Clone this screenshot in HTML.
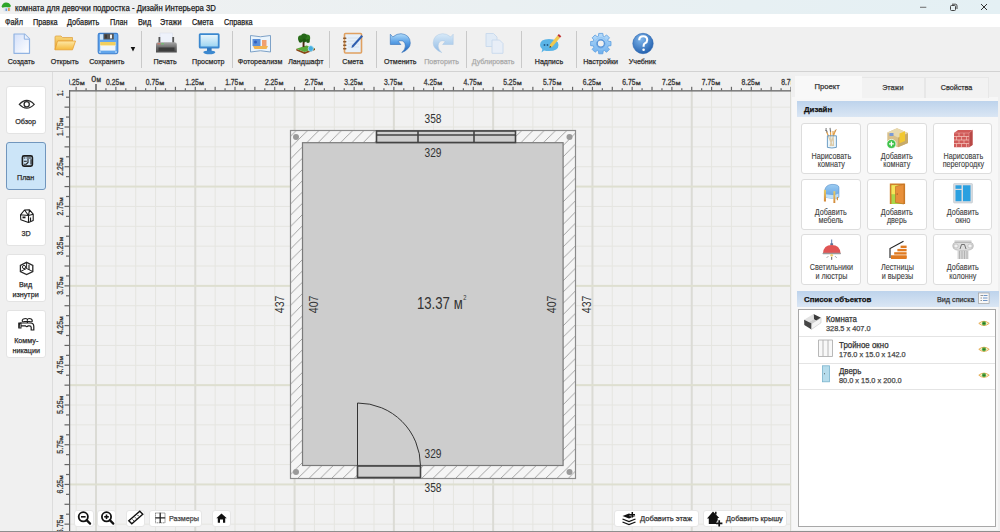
<!DOCTYPE html>
<html><head><meta charset="utf-8"><style>
*{margin:0;padding:0;box-sizing:border-box}
html,body{width:1000px;height:532px;overflow:hidden;background:#f0f0f0;font-family:"Liberation Sans",sans-serif;color:#222}
.a{position:absolute}
.t{position:absolute;white-space:nowrap;line-height:1;-webkit-text-stroke:0.25px currentColor}
.s{display:inline-block;transform-origin:0 50%}
.c{text-align:center}
.c .s{transform-origin:50% 50%}
.sep{position:absolute;top:31px;width:1px;height:37px;background:#c9c9c9}
.lb{position:absolute;left:6px;width:40px;height:48px;background:#fff;border:1px solid #e3e3e3;border-radius:3px}
.db{position:absolute;width:60px;height:51px;background:#fff;border:1px solid #dddddd;border-radius:3px}
.bb{position:absolute;top:510px;height:17px;background:#fff;border:1px solid #e6e6e6;border-radius:3px}
.ic{position:absolute}
</style></head><body>
<div class="a" style="left:0;top:0;width:1000px;height:14px;background:linear-gradient(90deg,#f0f1f1 0%,#eaf0f2 50%,#e4f0f4 100%)"></div>

<div class="t" style="left:14.7px;top:4px;font-size:9.2px;color:#1a1a1a;"><span class="s" style="transform:scaleX(0.845)">комната для девочки подростка - Дизайн Интерьера 3D</span></div>

<div class="a" style="left:0;top:14px;width:1000px;height:13.3px;background:#fff"></div>
<div class="t" style="left:5px;top:17.8px;font-size:8.7px;color:#1a1a1a;"><span class="s" style="transform:scaleX(0.84)">Файл</span></div>
<div class="t" style="left:33px;top:17.8px;font-size:8.7px;color:#1a1a1a;"><span class="s" style="transform:scaleX(0.84)">Правка</span></div>
<div class="t" style="left:67px;top:17.8px;font-size:8.7px;color:#1a1a1a;"><span class="s" style="transform:scaleX(0.84)">Добавить</span></div>
<div class="t" style="left:110px;top:17.8px;font-size:8.7px;color:#1a1a1a;"><span class="s" style="transform:scaleX(0.84)">План</span></div>
<div class="t" style="left:138px;top:17.8px;font-size:8.7px;color:#1a1a1a;"><span class="s" style="transform:scaleX(0.84)">Вид</span></div>
<div class="t" style="left:160px;top:17.8px;font-size:8.7px;color:#1a1a1a;"><span class="s" style="transform:scaleX(0.84)">Этажи</span></div>
<div class="t" style="left:192px;top:17.8px;font-size:8.7px;color:#1a1a1a;"><span class="s" style="transform:scaleX(0.84)">Смета</span></div>
<div class="t" style="left:224px;top:17.8px;font-size:8.7px;color:#1a1a1a;"><span class="s" style="transform:scaleX(0.84)">Справка</span></div>
<div class="a" style="left:0;top:27.3px;width:1000px;height:43.5px;background:#f0f0f0"></div>
<div class="a" style="left:0;top:70.5px;width:1000px;height:1.5px;background:#d2d2d2"></div>
<div class="sep" style="left:141px"></div>
<div class="sep" style="left:232px"></div>
<div class="sep" style="left:329px"></div>
<div class="sep" style="left:376px"></div>
<div class="sep" style="left:466px"></div>
<div class="sep" style="left:521px"></div>
<div class="sep" style="left:576px"></div>
<div class="t" style="left:21.5px;top:57.8px;font-size:8px;color:#2a2a2a;width:70px;margin-left:-35.0px;text-align:center;"><span class="s" style="transform:scaleX(0.89);transform-origin:50% 50%">Создать</span></div>
<div class="t" style="left:64.3px;top:57.8px;font-size:8px;color:#2a2a2a;width:70px;margin-left:-35.0px;text-align:center;"><span class="s" style="transform:scaleX(0.89);transform-origin:50% 50%">Открыть</span></div>
<div class="t" style="left:107.1px;top:57.8px;font-size:8px;color:#2a2a2a;width:70px;margin-left:-35.0px;text-align:center;"><span class="s" style="transform:scaleX(0.89);transform-origin:50% 50%">Сохранить</span></div>
<div class="t" style="left:165.3px;top:57.8px;font-size:8px;color:#2a2a2a;width:70px;margin-left:-35.0px;text-align:center;"><span class="s" style="transform:scaleX(0.89);transform-origin:50% 50%">Печать</span></div>
<div class="t" style="left:207.9px;top:57.8px;font-size:8px;color:#2a2a2a;width:70px;margin-left:-35.0px;text-align:center;"><span class="s" style="transform:scaleX(0.89);transform-origin:50% 50%">Просмотр</span></div>
<div class="t" style="left:259.6px;top:57.8px;font-size:8px;color:#2a2a2a;width:70px;margin-left:-35.0px;text-align:center;"><span class="s" style="transform:scaleX(0.89);transform-origin:50% 50%">Фотореализм</span></div>
<div class="t" style="left:305.5px;top:57.8px;font-size:8px;color:#2a2a2a;width:70px;margin-left:-35.0px;text-align:center;"><span class="s" style="transform:scaleX(0.89);transform-origin:50% 50%">Ландшафт</span></div>
<div class="t" style="left:352.8px;top:57.8px;font-size:8px;color:#2a2a2a;width:70px;margin-left:-35.0px;text-align:center;"><span class="s" style="transform:scaleX(0.89);transform-origin:50% 50%">Смета</span></div>
<div class="t" style="left:400px;top:57.8px;font-size:8px;color:#2a2a2a;width:70px;margin-left:-35.0px;text-align:center;"><span class="s" style="transform:scaleX(0.89);transform-origin:50% 50%">Отменить</span></div>
<div class="t" style="left:441.6px;top:57.8px;font-size:8px;color:#a9a9a9;width:70px;margin-left:-35.0px;text-align:center;"><span class="s" style="transform:scaleX(0.89);transform-origin:50% 50%">Повторить</span></div>
<div class="t" style="left:493.1px;top:57.8px;font-size:8px;color:#a9a9a9;width:70px;margin-left:-35.0px;text-align:center;"><span class="s" style="transform:scaleX(0.89);transform-origin:50% 50%">Дублировать</span></div>
<div class="t" style="left:548.8px;top:57.8px;font-size:8px;color:#2a2a2a;width:70px;margin-left:-35.0px;text-align:center;"><span class="s" style="transform:scaleX(0.89);transform-origin:50% 50%">Надпись</span></div>
<div class="t" style="left:600.3px;top:57.8px;font-size:8px;color:#2a2a2a;width:70px;margin-left:-35.0px;text-align:center;"><span class="s" style="transform:scaleX(0.89);transform-origin:50% 50%">Настройки</span></div>
<div class="t" style="left:642.5px;top:57.8px;font-size:8px;color:#2a2a2a;width:70px;margin-left:-35.0px;text-align:center;"><span class="s" style="transform:scaleX(0.89);transform-origin:50% 50%">Учебник</span></div>

<div class="a" style="left:52px;top:72px;width:1px;height:459px;background:#dcdcdc"></div>
<div class="lb" style="top:86px;"></div>
<div class="t c" style="left:6px;top:117.6px;width:40px;font-size:8px;color:#2a2a2a"><span class="s" style="transform:scaleX(.9)">Обзор</span></div>
<div class="lb" style="top:142px;background:#cce5f8;border-color:#7196bd;"></div>
<div class="t c" style="left:6px;top:173.6px;width:40px;font-size:8px;color:#2a2a2a"><span class="s" style="transform:scaleX(.9)">План</span></div>
<div class="lb" style="top:198px;"></div>
<div class="t c" style="left:6px;top:229.6px;width:40px;font-size:8px;color:#2a2a2a"><span class="s" style="transform:scaleX(.9)">3D</span></div>
<div class="lb" style="top:254px;"></div>
<div class="t c" style="left:6px;top:280px;width:40px;font-size:8px;line-height:10px;color:#2a2a2a"><span class="s" style="transform:scaleX(.9)">Вид<br>изнутри</span></div>
<div class="lb" style="top:310px;"></div>
<div class="t c" style="left:6px;top:336px;width:40px;font-size:8px;line-height:10px;color:#2a2a2a"><span class="s" style="transform:scaleX(.9)">Комму-<br>никации</span></div>

<svg class="a" style="left:53px;top:72px" width="738" height="460" viewBox="53 72 738 460">
<defs><pattern id="hatch" patternUnits="userSpaceOnUse" width="11.27" height="11.27" x="9.85" y="0"><rect width="11.27" height="11.27" fill="#f5f5f5"/><path d="M-1,1 L1,-1 M0,11.27 L11.27,0 M10.27,12.27 L12.27,10.27" stroke="#9a9a9a" stroke-width="0.9"/></pattern><clipPath id="cvclip"><rect x="70" y="91" width="721" height="441"/></clipPath><clipPath id="trclip"><rect x="69" y="72" width="722" height="20"/></clipPath><clipPath id="lrclip"><rect x="53" y="90" width="18" height="442"/></clipPath></defs>
<rect x="53" y="72" width="738" height="460" fill="#f0f0f0"/>
<g clip-path="url(#cvclip)">
<rect x="70" y="91" width="721" height="441" fill="#f1f1f1"/>
<rect x="55.78" y="91" width="1" height="441" fill="#e5e5e0"/>
<rect x="75.64" y="91" width="1" height="441" fill="#e5e5e0"/>
<rect x="115.36" y="91" width="1" height="441" fill="#e5e5e0"/>
<rect x="135.22" y="91" width="1" height="441" fill="#e5e5e0"/>
<rect x="155.07" y="91" width="1" height="441" fill="#e5e5e0"/>
<rect x="174.93" y="91" width="1" height="441" fill="#e5e5e0"/>
<rect x="214.65" y="91" width="1" height="441" fill="#e5e5e0"/>
<rect x="234.50" y="91" width="1" height="441" fill="#e5e5e0"/>
<rect x="254.36" y="91" width="1" height="441" fill="#e5e5e0"/>
<rect x="274.22" y="91" width="1" height="441" fill="#e5e5e0"/>
<rect x="313.93" y="91" width="1" height="441" fill="#e5e5e0"/>
<rect x="333.79" y="91" width="1" height="441" fill="#e5e5e0"/>
<rect x="353.65" y="91" width="1" height="441" fill="#e5e5e0"/>
<rect x="373.50" y="91" width="1" height="441" fill="#e5e5e0"/>
<rect x="413.22" y="91" width="1" height="441" fill="#e5e5e0"/>
<rect x="433.08" y="91" width="1" height="441" fill="#e5e5e0"/>
<rect x="452.94" y="91" width="1" height="441" fill="#e5e5e0"/>
<rect x="472.79" y="91" width="1" height="441" fill="#e5e5e0"/>
<rect x="512.51" y="91" width="1" height="441" fill="#e5e5e0"/>
<rect x="532.37" y="91" width="1" height="441" fill="#e5e5e0"/>
<rect x="552.22" y="91" width="1" height="441" fill="#e5e5e0"/>
<rect x="572.08" y="91" width="1" height="441" fill="#e5e5e0"/>
<rect x="611.80" y="91" width="1" height="441" fill="#e5e5e0"/>
<rect x="631.65" y="91" width="1" height="441" fill="#e5e5e0"/>
<rect x="651.51" y="91" width="1" height="441" fill="#e5e5e0"/>
<rect x="671.37" y="91" width="1" height="441" fill="#e5e5e0"/>
<rect x="711.08" y="91" width="1" height="441" fill="#e5e5e0"/>
<rect x="730.94" y="91" width="1" height="441" fill="#e5e5e0"/>
<rect x="750.80" y="91" width="1" height="441" fill="#e5e5e0"/>
<rect x="770.66" y="91" width="1" height="441" fill="#e5e5e0"/>
<rect x="70" y="7.36" width="721" height="1" fill="#e5e5e0"/>
<rect x="70" y="27.21" width="721" height="1" fill="#e5e5e0"/>
<rect x="70" y="47.07" width="721" height="1" fill="#e5e5e0"/>
<rect x="70" y="66.93" width="721" height="1" fill="#e5e5e0"/>
<rect x="70" y="106.64" width="721" height="1" fill="#e5e5e0"/>
<rect x="70" y="126.50" width="721" height="1" fill="#e5e5e0"/>
<rect x="70" y="146.36" width="721" height="1" fill="#e5e5e0"/>
<rect x="70" y="166.22" width="721" height="1" fill="#e5e5e0"/>
<rect x="70" y="205.93" width="721" height="1" fill="#e5e5e0"/>
<rect x="70" y="225.79" width="721" height="1" fill="#e5e5e0"/>
<rect x="70" y="245.65" width="721" height="1" fill="#e5e5e0"/>
<rect x="70" y="265.50" width="721" height="1" fill="#e5e5e0"/>
<rect x="70" y="305.22" width="721" height="1" fill="#e5e5e0"/>
<rect x="70" y="325.08" width="721" height="1" fill="#e5e5e0"/>
<rect x="70" y="344.93" width="721" height="1" fill="#e5e5e0"/>
<rect x="70" y="364.79" width="721" height="1" fill="#e5e5e0"/>
<rect x="70" y="404.51" width="721" height="1" fill="#e5e5e0"/>
<rect x="70" y="424.36" width="721" height="1" fill="#e5e5e0"/>
<rect x="70" y="444.22" width="721" height="1" fill="#e5e5e0"/>
<rect x="70" y="464.08" width="721" height="1" fill="#e5e5e0"/>
<rect x="70" y="503.79" width="721" height="1" fill="#e5e5e0"/>
<rect x="70" y="523.65" width="721" height="1" fill="#e5e5e0"/>
<rect x="95.00" y="91" width="2" height="441" fill="#dbdbd5"/>
<rect x="194.29" y="91" width="2" height="441" fill="#dbdbd5"/>
<rect x="293.58" y="91" width="2" height="441" fill="#dbdbd5"/>
<rect x="392.86" y="91" width="2" height="441" fill="#dbdbd5"/>
<rect x="492.15" y="91" width="2" height="441" fill="#dbdbd5"/>
<rect x="591.44" y="91" width="2" height="441" fill="#dbdbd5"/>
<rect x="690.73" y="91" width="2" height="441" fill="#dbdbd5"/>
<rect x="790.01" y="91" width="2" height="441" fill="#dbdbd5"/>
<rect x="70" y="-13.00" width="721" height="2" fill="#dedfd0"/>
<rect x="70" y="86.29" width="721" height="2" fill="#dedfd0"/>
<rect x="70" y="185.57" width="721" height="2" fill="#dedfd0"/>
<rect x="70" y="284.86" width="721" height="2" fill="#dedfd0"/>
<rect x="70" y="384.15" width="721" height="2" fill="#dedfd0"/>
<rect x="70" y="483.44" width="721" height="2" fill="#dedfd0"/>
<rect x="290.5" y="130.5" width="285" height="348" fill="url(#hatch)" stroke="#8a8a8a" stroke-width="1.2"/>
<rect x="302.5" y="142.7" width="260.6" height="322.8" fill="#cdcdcd" stroke="#7a7a7a" stroke-width="1.2"/>
<circle cx="296" cy="137" r="3" fill="#9a9a9a"/>
<circle cx="569.5" cy="137" r="3" fill="#9a9a9a"/>
<circle cx="296" cy="472" r="3" fill="#9a9a9a"/>
<circle cx="569.5" cy="472" r="3" fill="#9a9a9a"/>
<rect x="376.5" y="131" width="139" height="11.5" fill="#cfcfcf" stroke="#444" stroke-width="1.6"/>
<line x1="376.5" y1="135" x2="515.5" y2="135" stroke="#444" stroke-width="1.6"/>
<line x1="418" y1="131" x2="418" y2="142.5" stroke="#444" stroke-width="1.6"/>
<line x1="474" y1="131" x2="474" y2="142.5" stroke="#444" stroke-width="1.6"/>
<path d="M357.5,466 L357.5,403 A63,63 0 0 1 420.5,466" fill="none" stroke="#333" stroke-width="1"/>
<rect x="357.5" y="466" width="63" height="11.5" fill="#cfcfcf" stroke="#444" stroke-width="1.6"/>
<g font-family="Liberation Sans" font-size="12" fill="#333">
<text x="424.5" y="123" textLength="17" lengthAdjust="spacingAndGlyphs">358</text>
<text x="424.5" y="157.2" textLength="17" lengthAdjust="spacingAndGlyphs">329</text>
<text x="424.5" y="458" textLength="17" lengthAdjust="spacingAndGlyphs">329</text>
<text x="424.5" y="492" textLength="17" lengthAdjust="spacingAndGlyphs">358</text>
<text transform="translate(283.8,313.2) rotate(-90)" textLength="17.5" lengthAdjust="spacingAndGlyphs">437</text>
<text transform="translate(317.8,313.2) rotate(-90)" textLength="17.5" lengthAdjust="spacingAndGlyphs">407</text>
<text transform="translate(556,313.2) rotate(-90)" textLength="17.5" lengthAdjust="spacingAndGlyphs">407</text>
<text transform="translate(591,313.2) rotate(-90)" textLength="17.5" lengthAdjust="spacingAndGlyphs">437</text>
<text x="416.9" y="308.5" font-size="15.6" textLength="33" lengthAdjust="spacingAndGlyphs">13.37</text>
<text x="453.8" y="308.5" font-size="15.6" textLength="9" lengthAdjust="spacingAndGlyphs">м</text>
<text x="463.2" y="299.8" font-size="7" textLength="3.2" lengthAdjust="spacingAndGlyphs">2</text>
</g>
</g>
<g clip-path="url(#trclip)">
<rect x="69" y="90.2" width="722" height="1.3" fill="#666"/>
<rect x="65.61" y="88.2" width="1.2" height="2.2" fill="#666"/>
<rect x="75.54" y="86.8" width="1.2" height="3.6" fill="#666"/>
<rect x="85.47" y="88.2" width="1.2" height="2.2" fill="#666"/>
<rect x="95.20" y="84" width="1.6" height="6.5" fill="#666"/>
<rect x="105.33" y="88.2" width="1.2" height="2.2" fill="#666"/>
<rect x="115.26" y="86.8" width="1.2" height="3.6" fill="#666"/>
<rect x="125.19" y="88.2" width="1.2" height="2.2" fill="#666"/>
<rect x="135.12" y="86.8" width="1.2" height="3.6" fill="#666"/>
<rect x="145.04" y="88.2" width="1.2" height="2.2" fill="#666"/>
<rect x="154.97" y="86.8" width="1.2" height="3.6" fill="#666"/>
<rect x="164.90" y="88.2" width="1.2" height="2.2" fill="#666"/>
<rect x="174.83" y="86.8" width="1.2" height="3.6" fill="#666"/>
<rect x="184.76" y="88.2" width="1.2" height="2.2" fill="#666"/>
<rect x="194.69" y="86.8" width="1.2" height="3.6" fill="#666"/>
<rect x="204.62" y="88.2" width="1.2" height="2.2" fill="#666"/>
<rect x="214.55" y="86.8" width="1.2" height="3.6" fill="#666"/>
<rect x="224.47" y="88.2" width="1.2" height="2.2" fill="#666"/>
<rect x="234.40" y="86.8" width="1.2" height="3.6" fill="#666"/>
<rect x="244.33" y="88.2" width="1.2" height="2.2" fill="#666"/>
<rect x="254.26" y="86.8" width="1.2" height="3.6" fill="#666"/>
<rect x="264.19" y="88.2" width="1.2" height="2.2" fill="#666"/>
<rect x="274.12" y="86.8" width="1.2" height="3.6" fill="#666"/>
<rect x="284.05" y="88.2" width="1.2" height="2.2" fill="#666"/>
<rect x="293.98" y="86.8" width="1.2" height="3.6" fill="#666"/>
<rect x="303.90" y="88.2" width="1.2" height="2.2" fill="#666"/>
<rect x="313.83" y="86.8" width="1.2" height="3.6" fill="#666"/>
<rect x="323.76" y="88.2" width="1.2" height="2.2" fill="#666"/>
<rect x="333.69" y="86.8" width="1.2" height="3.6" fill="#666"/>
<rect x="343.62" y="88.2" width="1.2" height="2.2" fill="#666"/>
<rect x="353.55" y="86.8" width="1.2" height="3.6" fill="#666"/>
<rect x="363.48" y="88.2" width="1.2" height="2.2" fill="#666"/>
<rect x="373.40" y="86.8" width="1.2" height="3.6" fill="#666"/>
<rect x="383.33" y="88.2" width="1.2" height="2.2" fill="#666"/>
<rect x="393.26" y="86.8" width="1.2" height="3.6" fill="#666"/>
<rect x="403.19" y="88.2" width="1.2" height="2.2" fill="#666"/>
<rect x="413.12" y="86.8" width="1.2" height="3.6" fill="#666"/>
<rect x="423.05" y="88.2" width="1.2" height="2.2" fill="#666"/>
<rect x="432.98" y="86.8" width="1.2" height="3.6" fill="#666"/>
<rect x="442.91" y="88.2" width="1.2" height="2.2" fill="#666"/>
<rect x="452.84" y="86.8" width="1.2" height="3.6" fill="#666"/>
<rect x="462.76" y="88.2" width="1.2" height="2.2" fill="#666"/>
<rect x="472.69" y="86.8" width="1.2" height="3.6" fill="#666"/>
<rect x="482.62" y="88.2" width="1.2" height="2.2" fill="#666"/>
<rect x="492.55" y="86.8" width="1.2" height="3.6" fill="#666"/>
<rect x="502.48" y="88.2" width="1.2" height="2.2" fill="#666"/>
<rect x="512.41" y="86.8" width="1.2" height="3.6" fill="#666"/>
<rect x="522.34" y="88.2" width="1.2" height="2.2" fill="#666"/>
<rect x="532.26" y="86.8" width="1.2" height="3.6" fill="#666"/>
<rect x="542.19" y="88.2" width="1.2" height="2.2" fill="#666"/>
<rect x="552.12" y="86.8" width="1.2" height="3.6" fill="#666"/>
<rect x="562.05" y="88.2" width="1.2" height="2.2" fill="#666"/>
<rect x="571.98" y="86.8" width="1.2" height="3.6" fill="#666"/>
<rect x="581.91" y="88.2" width="1.2" height="2.2" fill="#666"/>
<rect x="591.84" y="86.8" width="1.2" height="3.6" fill="#666"/>
<rect x="601.77" y="88.2" width="1.2" height="2.2" fill="#666"/>
<rect x="611.70" y="86.8" width="1.2" height="3.6" fill="#666"/>
<rect x="621.62" y="88.2" width="1.2" height="2.2" fill="#666"/>
<rect x="631.55" y="86.8" width="1.2" height="3.6" fill="#666"/>
<rect x="641.48" y="88.2" width="1.2" height="2.2" fill="#666"/>
<rect x="651.41" y="86.8" width="1.2" height="3.6" fill="#666"/>
<rect x="661.34" y="88.2" width="1.2" height="2.2" fill="#666"/>
<rect x="671.27" y="86.8" width="1.2" height="3.6" fill="#666"/>
<rect x="681.20" y="88.2" width="1.2" height="2.2" fill="#666"/>
<rect x="691.12" y="86.8" width="1.2" height="3.6" fill="#666"/>
<rect x="701.05" y="88.2" width="1.2" height="2.2" fill="#666"/>
<rect x="710.98" y="86.8" width="1.2" height="3.6" fill="#666"/>
<rect x="720.91" y="88.2" width="1.2" height="2.2" fill="#666"/>
<rect x="730.84" y="86.8" width="1.2" height="3.6" fill="#666"/>
<rect x="740.77" y="88.2" width="1.2" height="2.2" fill="#666"/>
<rect x="750.70" y="86.8" width="1.2" height="3.6" fill="#666"/>
<rect x="760.63" y="88.2" width="1.2" height="2.2" fill="#666"/>
<rect x="770.56" y="86.8" width="1.2" height="3.6" fill="#666"/>
<rect x="780.48" y="88.2" width="1.2" height="2.2" fill="#666"/>
<rect x="790.41" y="86.8" width="1.2" height="3.6" fill="#666"/>
<g font-family="Liberation Sans" font-size="8" fill="#3a3a3a" stroke="#3a3a3a" stroke-width="0.3">
<text x="66.34" y="85" font-size="8.2" textLength="13.2" lengthAdjust="spacingAndGlyphs">0.25</text><text x="79.84" y="85" font-size="6.2" textLength="5" lengthAdjust="spacingAndGlyphs">м</text>
<text x="106.06" y="85" font-size="8.2" textLength="13.2" lengthAdjust="spacingAndGlyphs">0.25</text><text x="119.56" y="85" font-size="6.2" textLength="5" lengthAdjust="spacingAndGlyphs">м</text>
<text x="145.77" y="85" font-size="8.2" textLength="13.2" lengthAdjust="spacingAndGlyphs">0.75</text><text x="159.27" y="85" font-size="6.2" textLength="5" lengthAdjust="spacingAndGlyphs">м</text>
<text x="185.49" y="85" font-size="8.2" textLength="13.2" lengthAdjust="spacingAndGlyphs">1.25</text><text x="198.99" y="85" font-size="6.2" textLength="5" lengthAdjust="spacingAndGlyphs">м</text>
<text x="225.20" y="85" font-size="8.2" textLength="13.2" lengthAdjust="spacingAndGlyphs">1.75</text><text x="238.70" y="85" font-size="6.2" textLength="5" lengthAdjust="spacingAndGlyphs">м</text>
<text x="264.92" y="85" font-size="8.2" textLength="13.2" lengthAdjust="spacingAndGlyphs">2.25</text><text x="278.42" y="85" font-size="6.2" textLength="5" lengthAdjust="spacingAndGlyphs">м</text>
<text x="304.63" y="85" font-size="8.2" textLength="13.2" lengthAdjust="spacingAndGlyphs">2.75</text><text x="318.13" y="85" font-size="6.2" textLength="5" lengthAdjust="spacingAndGlyphs">м</text>
<text x="344.35" y="85" font-size="8.2" textLength="13.2" lengthAdjust="spacingAndGlyphs">3.25</text><text x="357.85" y="85" font-size="6.2" textLength="5" lengthAdjust="spacingAndGlyphs">м</text>
<text x="384.06" y="85" font-size="8.2" textLength="13.2" lengthAdjust="spacingAndGlyphs">3.75</text><text x="397.56" y="85" font-size="6.2" textLength="5" lengthAdjust="spacingAndGlyphs">м</text>
<text x="423.78" y="85" font-size="8.2" textLength="13.2" lengthAdjust="spacingAndGlyphs">4.25</text><text x="437.28" y="85" font-size="6.2" textLength="5" lengthAdjust="spacingAndGlyphs">м</text>
<text x="463.49" y="85" font-size="8.2" textLength="13.2" lengthAdjust="spacingAndGlyphs">4.75</text><text x="476.99" y="85" font-size="6.2" textLength="5" lengthAdjust="spacingAndGlyphs">м</text>
<text x="503.21" y="85" font-size="8.2" textLength="13.2" lengthAdjust="spacingAndGlyphs">5.25</text><text x="516.71" y="85" font-size="6.2" textLength="5" lengthAdjust="spacingAndGlyphs">м</text>
<text x="542.92" y="85" font-size="8.2" textLength="13.2" lengthAdjust="spacingAndGlyphs">5.75</text><text x="556.42" y="85" font-size="6.2" textLength="5" lengthAdjust="spacingAndGlyphs">м</text>
<text x="582.64" y="85" font-size="8.2" textLength="13.2" lengthAdjust="spacingAndGlyphs">6.25</text><text x="596.14" y="85" font-size="6.2" textLength="5" lengthAdjust="spacingAndGlyphs">м</text>
<text x="622.35" y="85" font-size="8.2" textLength="13.2" lengthAdjust="spacingAndGlyphs">6.75</text><text x="635.85" y="85" font-size="6.2" textLength="5" lengthAdjust="spacingAndGlyphs">м</text>
<text x="662.07" y="85" font-size="8.2" textLength="13.2" lengthAdjust="spacingAndGlyphs">7.25</text><text x="675.57" y="85" font-size="6.2" textLength="5" lengthAdjust="spacingAndGlyphs">м</text>
<text x="701.78" y="85" font-size="8.2" textLength="13.2" lengthAdjust="spacingAndGlyphs">7.75</text><text x="715.28" y="85" font-size="6.2" textLength="5" lengthAdjust="spacingAndGlyphs">м</text>
<text x="741.50" y="85" font-size="8.2" textLength="13.2" lengthAdjust="spacingAndGlyphs">8.25</text><text x="755.00" y="85" font-size="6.2" textLength="5" lengthAdjust="spacingAndGlyphs">м</text>
<text x="781.21" y="85" font-size="8.2" textLength="13.2" lengthAdjust="spacingAndGlyphs">8.75</text><text x="794.71" y="85" font-size="6.2" textLength="5" lengthAdjust="spacingAndGlyphs">м</text>
<text x="91.2" y="82" font-size="8.7" textLength="5" lengthAdjust="spacingAndGlyphs">0</text><text x="96.5" y="82" font-size="6.5" textLength="4.5" lengthAdjust="spacingAndGlyphs">м</text>
</g></g>
<g clip-path="url(#lrclip)">
<rect x="69" y="90" width="1.2" height="442" fill="#666"/>
<rect x="64.5" y="-12.60" width="4.5" height="1.2" fill="#666"/>
<rect x="66" y="-2.67" width="3" height="1.2" fill="#666"/>
<rect x="64.5" y="7.26" width="4.5" height="1.2" fill="#666"/>
<rect x="66" y="17.18" width="3" height="1.2" fill="#666"/>
<rect x="64.5" y="27.11" width="4.5" height="1.2" fill="#666"/>
<rect x="66" y="37.04" width="3" height="1.2" fill="#666"/>
<rect x="64.5" y="46.97" width="4.5" height="1.2" fill="#666"/>
<rect x="66" y="56.90" width="3" height="1.2" fill="#666"/>
<rect x="64.5" y="66.83" width="4.5" height="1.2" fill="#666"/>
<rect x="66" y="76.76" width="3" height="1.2" fill="#666"/>
<rect x="64.5" y="86.69" width="4.5" height="1.2" fill="#666"/>
<rect x="66" y="96.61" width="3" height="1.2" fill="#666"/>
<rect x="64.5" y="106.54" width="4.5" height="1.2" fill="#666"/>
<rect x="66" y="116.47" width="3" height="1.2" fill="#666"/>
<rect x="64.5" y="126.40" width="4.5" height="1.2" fill="#666"/>
<rect x="66" y="136.33" width="3" height="1.2" fill="#666"/>
<rect x="64.5" y="146.26" width="4.5" height="1.2" fill="#666"/>
<rect x="66" y="156.19" width="3" height="1.2" fill="#666"/>
<rect x="64.5" y="166.12" width="4.5" height="1.2" fill="#666"/>
<rect x="66" y="176.04" width="3" height="1.2" fill="#666"/>
<rect x="64.5" y="185.97" width="4.5" height="1.2" fill="#666"/>
<rect x="66" y="195.90" width="3" height="1.2" fill="#666"/>
<rect x="64.5" y="205.83" width="4.5" height="1.2" fill="#666"/>
<rect x="66" y="215.76" width="3" height="1.2" fill="#666"/>
<rect x="64.5" y="225.69" width="4.5" height="1.2" fill="#666"/>
<rect x="66" y="235.62" width="3" height="1.2" fill="#666"/>
<rect x="64.5" y="245.55" width="4.5" height="1.2" fill="#666"/>
<rect x="66" y="255.47" width="3" height="1.2" fill="#666"/>
<rect x="64.5" y="265.40" width="4.5" height="1.2" fill="#666"/>
<rect x="66" y="275.33" width="3" height="1.2" fill="#666"/>
<rect x="64.5" y="285.26" width="4.5" height="1.2" fill="#666"/>
<rect x="66" y="295.19" width="3" height="1.2" fill="#666"/>
<rect x="64.5" y="305.12" width="4.5" height="1.2" fill="#666"/>
<rect x="66" y="315.05" width="3" height="1.2" fill="#666"/>
<rect x="64.5" y="324.98" width="4.5" height="1.2" fill="#666"/>
<rect x="66" y="334.90" width="3" height="1.2" fill="#666"/>
<rect x="64.5" y="344.83" width="4.5" height="1.2" fill="#666"/>
<rect x="66" y="354.76" width="3" height="1.2" fill="#666"/>
<rect x="64.5" y="364.69" width="4.5" height="1.2" fill="#666"/>
<rect x="66" y="374.62" width="3" height="1.2" fill="#666"/>
<rect x="64.5" y="384.55" width="4.5" height="1.2" fill="#666"/>
<rect x="66" y="394.48" width="3" height="1.2" fill="#666"/>
<rect x="64.5" y="404.41" width="4.5" height="1.2" fill="#666"/>
<rect x="66" y="414.33" width="3" height="1.2" fill="#666"/>
<rect x="64.5" y="424.26" width="4.5" height="1.2" fill="#666"/>
<rect x="66" y="434.19" width="3" height="1.2" fill="#666"/>
<rect x="64.5" y="444.12" width="4.5" height="1.2" fill="#666"/>
<rect x="66" y="454.05" width="3" height="1.2" fill="#666"/>
<rect x="64.5" y="463.98" width="4.5" height="1.2" fill="#666"/>
<rect x="66" y="473.91" width="3" height="1.2" fill="#666"/>
<rect x="64.5" y="483.84" width="4.5" height="1.2" fill="#666"/>
<rect x="66" y="493.76" width="3" height="1.2" fill="#666"/>
<rect x="64.5" y="503.69" width="4.5" height="1.2" fill="#666"/>
<rect x="66" y="513.62" width="3" height="1.2" fill="#666"/>
<rect x="64.5" y="523.55" width="4.5" height="1.2" fill="#666"/>
<rect x="66" y="533.48" width="3" height="1.2" fill="#666"/>
<g font-family="Liberation Sans" font-size="8" fill="#3a3a3a" stroke="#3a3a3a" stroke-width="0.3">
<g transform="translate(62.8,7.86) rotate(-90)"><text x="-9" y="0" font-size="8.2" textLength="13.6" lengthAdjust="spacingAndGlyphs">0.25</text><text x="4.8" y="0" font-size="6.2" textLength="4.5" lengthAdjust="spacingAndGlyphs">м</text></g>
<g transform="translate(62.8,47.57) rotate(-90)"><text x="-9" y="0" font-size="8.2" textLength="13.6" lengthAdjust="spacingAndGlyphs">0.75</text><text x="4.8" y="0" font-size="6.2" textLength="4.5" lengthAdjust="spacingAndGlyphs">м</text></g>
<g transform="translate(62.8,87.29) rotate(-90)"><text x="-9" y="0" font-size="8.2" textLength="13.6" lengthAdjust="spacingAndGlyphs">1.25</text><text x="4.8" y="0" font-size="6.2" textLength="4.5" lengthAdjust="spacingAndGlyphs">м</text></g>
<g transform="translate(62.8,127.00) rotate(-90)"><text x="-9" y="0" font-size="8.2" textLength="13.6" lengthAdjust="spacingAndGlyphs">1.75</text><text x="4.8" y="0" font-size="6.2" textLength="4.5" lengthAdjust="spacingAndGlyphs">м</text></g>
<g transform="translate(62.8,166.72) rotate(-90)"><text x="-9" y="0" font-size="8.2" textLength="13.6" lengthAdjust="spacingAndGlyphs">2.25</text><text x="4.8" y="0" font-size="6.2" textLength="4.5" lengthAdjust="spacingAndGlyphs">м</text></g>
<g transform="translate(62.8,206.43) rotate(-90)"><text x="-9" y="0" font-size="8.2" textLength="13.6" lengthAdjust="spacingAndGlyphs">2.75</text><text x="4.8" y="0" font-size="6.2" textLength="4.5" lengthAdjust="spacingAndGlyphs">м</text></g>
<g transform="translate(62.8,246.15) rotate(-90)"><text x="-9" y="0" font-size="8.2" textLength="13.6" lengthAdjust="spacingAndGlyphs">3.25</text><text x="4.8" y="0" font-size="6.2" textLength="4.5" lengthAdjust="spacingAndGlyphs">м</text></g>
<g transform="translate(62.8,285.86) rotate(-90)"><text x="-9" y="0" font-size="8.2" textLength="13.6" lengthAdjust="spacingAndGlyphs">3.75</text><text x="4.8" y="0" font-size="6.2" textLength="4.5" lengthAdjust="spacingAndGlyphs">м</text></g>
<g transform="translate(62.8,325.58) rotate(-90)"><text x="-9" y="0" font-size="8.2" textLength="13.6" lengthAdjust="spacingAndGlyphs">4.25</text><text x="4.8" y="0" font-size="6.2" textLength="4.5" lengthAdjust="spacingAndGlyphs">м</text></g>
<g transform="translate(62.8,365.29) rotate(-90)"><text x="-9" y="0" font-size="8.2" textLength="13.6" lengthAdjust="spacingAndGlyphs">4.75</text><text x="4.8" y="0" font-size="6.2" textLength="4.5" lengthAdjust="spacingAndGlyphs">м</text></g>
<g transform="translate(62.8,405.01) rotate(-90)"><text x="-9" y="0" font-size="8.2" textLength="13.6" lengthAdjust="spacingAndGlyphs">5.25</text><text x="4.8" y="0" font-size="6.2" textLength="4.5" lengthAdjust="spacingAndGlyphs">м</text></g>
<g transform="translate(62.8,444.72) rotate(-90)"><text x="-9" y="0" font-size="8.2" textLength="13.6" lengthAdjust="spacingAndGlyphs">5.75</text><text x="4.8" y="0" font-size="6.2" textLength="4.5" lengthAdjust="spacingAndGlyphs">м</text></g>
<g transform="translate(62.8,484.44) rotate(-90)"><text x="-9" y="0" font-size="8.2" textLength="13.6" lengthAdjust="spacingAndGlyphs">6.25</text><text x="4.8" y="0" font-size="6.2" textLength="4.5" lengthAdjust="spacingAndGlyphs">м</text></g>
<g transform="translate(62.8,524.15) rotate(-90)"><text x="-9" y="0" font-size="8.2" textLength="13.6" lengthAdjust="spacingAndGlyphs">6.75</text><text x="4.8" y="0" font-size="6.2" textLength="4.5" lengthAdjust="spacingAndGlyphs">м</text></g>
</g></g>
</svg>
<div class="bb" style="left:74.3px;width:19.5px"></div>
<div class="bb" style="left:97.2px;width:19.099999999999994px"></div>
<div class="bb" style="left:125.8px;width:19.000000000000014px"></div>
<div class="bb" style="left:148.6px;width:53.70000000000002px"></div>
<div class="bb" style="left:212px;width:19.19999999999999px"></div>
<div class="t" style="left:169px;top:515.2px;font-size:8px;color:#444;"><span class="s" style="transform:scaleX(0.9)">Размеры</span></div>
<div class="bb" style="left:613.6px;width:85.39999999999998px"></div>
<div class="bb" style="left:702.6px;width:84.79999999999995px"></div>
<div class="t" style="left:640px;top:515.2px;font-size:8px;color:#333;"><span class="s" style="transform:scaleX(0.95)">Добавить этаж</span></div>
<div class="t" style="left:726px;top:515.2px;font-size:8px;color:#333;"><span class="s" style="transform:scaleX(0.92)">Добавить крышу</span></div>

<div class="a" style="left:791.5px;top:72px;width:208.5px;height:460px;background:#f0f0f0"></div>
<div class="a" style="left:792px;top:97px;width:206px;height:433px;background:#f7f7f7"></div>
<div class="a" style="left:861px;top:76.5px;width:64px;height:21px;background:#f2f2f2;border:1px solid #e7e7e7;border-bottom:none"></div>
<div class="a" style="left:925px;top:76.5px;width:64px;height:21px;background:#f2f2f2;border:1px solid #e7e7e7;border-bottom:none"></div>
<div class="a" style="left:795px;top:75.5px;width:67px;height:23px;background:#f8f8f8"></div>
<div class="t" style="left:827px;top:83px;font-size:8px;color:#333;width:60px;margin-left:-30.0px;text-align:center;"><span class="s" style="transform:scaleX(0.96);transform-origin:50% 50%">Проект</span></div>
<div class="t" style="left:893px;top:84px;font-size:8px;color:#333;width:60px;margin-left:-30.0px;text-align:center;"><span class="s" style="transform:scaleX(0.9);transform-origin:50% 50%">Этажи</span></div>
<div class="t" style="left:957px;top:84px;font-size:8px;color:#333;width:60px;margin-left:-30.0px;text-align:center;"><span class="s" style="transform:scaleX(0.9);transform-origin:50% 50%">Свойства</span></div>
<div class="a" style="left:797px;top:101px;width:201px;height:16px;background:linear-gradient(180deg,#bdd3ec,#dae6f4)"></div>
<div class="t" style="left:804px;top:106px;font-size:8px;color:#111;font-weight:bold;"><span class="s" style="transform:scaleX(0.98)">Дизайн</span></div>
<div class="db" style="left:801px;top:122.5px;width:60px"></div>
<div class="t c" style="left:801px;top:151.5px;width:60px;font-size:8.5px;line-height:8.5px;color:#3c3c3c;-webkit-text-stroke:0.1px #3c3c3c"><span class="s" style="transform:scaleX(.85)">Нарисовать<br>комнату</span></div>
<div class="db" style="left:867px;top:122.5px;width:60px"></div>
<div class="t c" style="left:867px;top:151.5px;width:60px;font-size:8.5px;line-height:8.5px;color:#3c3c3c;-webkit-text-stroke:0.1px #3c3c3c"><span class="s" style="transform:scaleX(.85)">Добавить<br>комнату</span></div>
<div class="db" style="left:933px;top:122.5px;width:59px"></div>
<div class="t c" style="left:933px;top:151.5px;width:60px;font-size:8.5px;line-height:8.5px;color:#3c3c3c;-webkit-text-stroke:0.1px #3c3c3c"><span class="s" style="transform:scaleX(.85)">Нарисовать<br>перегородку</span></div>
<div class="db" style="left:801px;top:178.5px;width:60px"></div>
<div class="t c" style="left:801px;top:207.5px;width:60px;font-size:8.5px;line-height:8.5px;color:#3c3c3c;-webkit-text-stroke:0.1px #3c3c3c"><span class="s" style="transform:scaleX(.85)">Добавить<br>мебель</span></div>
<div class="db" style="left:867px;top:178.5px;width:60px"></div>
<div class="t c" style="left:867px;top:207.5px;width:60px;font-size:8.5px;line-height:8.5px;color:#3c3c3c;-webkit-text-stroke:0.1px #3c3c3c"><span class="s" style="transform:scaleX(.85)">Добавить<br>дверь</span></div>
<div class="db" style="left:933px;top:178.5px;width:59px"></div>
<div class="t c" style="left:933px;top:207.5px;width:60px;font-size:8.5px;line-height:8.5px;color:#3c3c3c;-webkit-text-stroke:0.1px #3c3c3c"><span class="s" style="transform:scaleX(.85)">Добавить<br>окно</span></div>
<div class="db" style="left:801px;top:234px;width:60px"></div>
<div class="t c" style="left:801px;top:263px;width:60px;font-size:8.5px;line-height:8.5px;color:#3c3c3c;-webkit-text-stroke:0.1px #3c3c3c"><span class="s" style="transform:scaleX(.85)">Светильники<br>и люстры</span></div>
<div class="db" style="left:867px;top:234px;width:60px"></div>
<div class="t c" style="left:867px;top:263px;width:60px;font-size:8.5px;line-height:8.5px;color:#3c3c3c;-webkit-text-stroke:0.1px #3c3c3c"><span class="s" style="transform:scaleX(.85)">Лестницы<br>и вырезы</span></div>
<div class="db" style="left:933px;top:234px;width:59px"></div>
<div class="t c" style="left:933px;top:263px;width:60px;font-size:8.5px;line-height:8.5px;color:#3c3c3c;-webkit-text-stroke:0.1px #3c3c3c"><span class="s" style="transform:scaleX(.85)">Добавить<br>колонну</span></div>

<div class="a" style="left:797px;top:290.5px;width:202px;height:16px;background:linear-gradient(180deg,#bdd3ec,#dae6f4)"></div>
<div class="t" style="left:804px;top:295.5px;font-size:8px;color:#111;font-weight:bold;"><span class="s" style="transform:scaleX(0.98)">Список объектов</span></div>
<div class="t" style="left:937px;top:295.5px;font-size:8px;color:#333;"><span class="s" style="transform:scaleX(0.9)">Вид списка</span></div>

<div class="a" style="left:798px;top:309px;width:198px;height:218px;background:#fff;border:1px solid #a8a8a8"></div>
<div class="a" style="left:799px;top:336px;width:196px;height:1px;background:#e4e4e4"></div>
<div class="a" style="left:799px;top:362.5px;width:196px;height:1px;background:#e4e4e4"></div>
<div class="a" style="left:799px;top:388.5px;width:196px;height:1px;background:#e4e4e4"></div>
<div class="t" style="left:825.5px;top:314.6px;font-size:8.6px;color:#333;"><span class="s" style="transform:scaleX(0.92)">Комната</span></div>
<div class="t" style="left:825.5px;top:324.5px;font-size:8px;color:#444;"><span class="s" style="transform:scaleX(0.92)">328.5 x 407.0</span></div>
<div class="t" style="left:839px;top:341px;font-size:8.6px;color:#333;"><span class="s" style="transform:scaleX(0.92)">Тройное окно</span></div>
<div class="t" style="left:839px;top:350.5px;font-size:8px;color:#444;"><span class="s" style="transform:scaleX(0.92)">176.0 x 15.0 x 142.0</span></div>
<div class="t" style="left:839px;top:367px;font-size:8.6px;color:#333;"><span class="s" style="transform:scaleX(0.92)">Дверь</span></div>
<div class="t" style="left:839px;top:376.5px;font-size:8px;color:#444;"><span class="s" style="transform:scaleX(0.92)">80.0 x 15.0 x 200.0</span></div>

<svg class="a" style="left:0;top:0" width="1000" height="532" viewBox="0 0 1000 532">
<defs>
<linearGradient id="gDoc" x1="0" y1="0" x2="1" y2="1"><stop offset="0" stop-color="#d3e0fa"/><stop offset="1" stop-color="#ffffff"/></linearGradient>
<linearGradient id="gFold" x1="0" y1="0" x2="0" y2="1"><stop offset="0" stop-color="#fde9a8"/><stop offset="1" stop-color="#f5b93c"/></linearGradient>
<linearGradient id="gFoldB" x1="0" y1="0" x2="0" y2="1"><stop offset="0" stop-color="#f8d77a"/><stop offset="1" stop-color="#e9a83a"/></linearGradient>
<linearGradient id="gMon" x1="0" y1="0" x2="0" y2="1"><stop offset="0" stop-color="#e8f5fc"/><stop offset="1" stop-color="#9fd6f2"/></linearGradient>
<linearGradient id="gPrn" x1="0" y1="0" x2="0" y2="1"><stop offset="0" stop-color="#a8a8a8"/><stop offset="0.5" stop-color="#6d6d6d"/><stop offset="1" stop-color="#4a4a4a"/></linearGradient>
<linearGradient id="gUndo" x1="0" y1="0" x2="0" y2="1"><stop offset="0" stop-color="#b0dcfa"/><stop offset=".45" stop-color="#5aa0e6"/><stop offset="1" stop-color="#1c5fb8"/></linearGradient>
<linearGradient id="gRedo" x1="0" y1="0" x2="0" y2="1"><stop offset="0" stop-color="#d8eaf8"/><stop offset=".5" stop-color="#b4d2ee"/><stop offset="1" stop-color="#8fb8e4"/></linearGradient>
<radialGradient id="gHelp" cx="0.4" cy="0.3" r="0.8"><stop offset="0" stop-color="#7fb6ec"/><stop offset="1" stop-color="#1a58a8"/></radialGradient>
<linearGradient id="gGear" x1="0" y1="0" x2="0" y2="1"><stop offset="0" stop-color="#b8dcfa"/><stop offset="1" stop-color="#6fb0ee"/></linearGradient>
<linearGradient id="gHdr" x1="0" y1="0" x2="0" y2="1"><stop offset="0" stop-color="#c4d8ee"/><stop offset="1" stop-color="#d6e4f3"/></linearGradient>
<linearGradient id="gChair" x1="0" y1="0" x2="0" y2="1"><stop offset="0" stop-color="#9ccdf2"/><stop offset="1" stop-color="#5b9be0"/></linearGradient><linearGradient id="gLeg" x1="0" y1="0" x2="0" y2="1"><stop offset="0" stop-color="#e6cf6a"/><stop offset="1" stop-color="#d4883a"/></linearGradient></defs>
<path d="M1.5,6.5 Q3,2.5 6,2.6 Q9.5,2.6 11,6 L9.5,7.8 Q6,6.5 2.5,7.8 Z" fill="#2ea52a"/>
<rect x="3.5" y="7.5" width="7" height="4" fill="#dfe6ee"/><rect x="5.5" y="8.5" width="1.6" height="2.5" fill="#6a9ad6"/><rect x="8" y="8" width="1.8" height="3" fill="#e09a50"/>
<path d="M920,7.3 H926.3" stroke="#777" stroke-width="1.1"/>
<rect x="950.5" y="5.5" width="5" height="5" rx="1" fill="none" stroke="#444" stroke-width="1"/><path d="M952,4.2 H955.5 Q957,4.2 957,5.8 V9" fill="none" stroke="#444" stroke-width="1"/>
<path d="M981,4 L987,10 M987,4 L981,10" stroke="#333" stroke-width="1"/>
<path d="M14,34 H24.5 L29.5,39 V53.3 H14 Z" fill="url(#gDoc)" stroke="#91b3e2" stroke-width="1.2" stroke-linejoin="round"/>
<path d="M24.3,34 V39.2 H29.5" fill="#e8f0fc" stroke="#91b3e2" stroke-width="1"/>
<path d="M55,49.5 V37 Q55,36 56,36 H61 L62.5,37.5 H72.5 V41 H58 Z" fill="url(#gFoldB)" stroke="#e0a448" stroke-width=".8"/>
<path d="M57.5,41 H75.5 L72.5,49.8 H55 Z" fill="url(#gFold)" stroke="#e8a030" stroke-width=".8"/>
<rect x="98.2" y="33.4" width="19.6" height="20.3" rx="1.6" fill="#62a6ec" stroke="#3c7fcf" stroke-width="1.1"/>
<rect x="100" y="34.2" width="3.2" height="5.5" fill="#cfe6fa"/><rect x="103.6" y="33.6" width="10.2" height="5.8" fill="#555"/><rect x="104.8" y="34.6" width="2.2" height="3.8" fill="#3a3a3a"/><rect x="110" y="34.6" width="2" height="3.8" fill="#f0f0f0"/>
<rect x="100.2" y="42" width="15.3" height="8.6" fill="#eef5fb"/><rect x="100.2" y="42" width="15.3" height="3" fill="#f0cf5e"/><rect x="100.2" y="45" width="15.3" height="1" fill="#f7e7b0"/>
<rect x="99.3" y="51.3" width="1.4" height="1.4" fill="#d8ecfb"/><rect x="115.3" y="51.3" width="1.4" height="1.4" fill="#d8ecfb"/>
<path d="M130.7,47 H135.2 L133,51.5 Z" fill="#111"/>
<rect x="160" y="33" width="12.5" height="10" fill="#eef2fb" stroke="#d8dce8" stroke-width=".5"/>
<rect x="158.5" y="37" width="1.8" height="6" fill="#555"/><rect x="172.3" y="37" width="1.8" height="6" fill="#555"/>
<path d="M156,44 Q156,42.3 158,42.3 H174.5 Q176.8,42.3 176.8,44 V52.5 H156 Z" fill="url(#gPrn)"/>
<rect x="158.5" y="47.5" width="16" height="3.5" fill="#3c3c3c"/><rect x="157.5" y="43.2" width="3" height="1.2" fill="#d07060"/><rect x="161" y="43.2" width="3" height="1.2" fill="#70c070"/>
<rect x="198.8" y="33.2" width="20.8" height="15.3" rx="1.5" fill="#3b88cf"/>
<rect x="200.6" y="35" width="17.2" height="11.5" fill="url(#gMon)"/>
<rect x="207" y="48" width="4.6" height="3.2" fill="#2f78c0"/><ellipse cx="209.3" cy="52.3" rx="6" ry="1.9" fill="#3b88cf"/>
<path d="M250.5,35.5 Q260.5,38 270.5,35.5 V52 Q260.5,49.5 250.5,52 Z" fill="#eaf4fc" stroke="#7ea2c8" stroke-width="1"/>
<rect x="252.5" y="39" width="8" height="7" fill="#5b8fd8"/><circle cx="255.5" cy="42" r="1.5" fill="#2f5fc0"/>
<rect x="262" y="40" width="4.5" height="6" fill="#f0a070"/>
<path d="M253,46 H268 L266.5,49 H254.5 Z" fill="#f2b450"/>
<path d="M296.3,48.8 L304.5,52 L315,48.3 V50 L304.5,54 L296.3,50.6 Z" fill="#8a4a18"/>
<path d="M296.3,48.8 L306.5,45.5 L315,48.3 L304.5,52 Z" fill="#5aa83a"/>
<ellipse cx="310.8" cy="48.6" rx="2.6" ry="2.9" fill="#46aee0" stroke="#bfe6f6" stroke-width=".7"/>
<rect x="302.6" y="41.5" width="1.9" height="5.5" fill="#4a2a10"/>
<circle cx="301.2" cy="38.5" r="3.2" fill="#2a6e1a"/><circle cx="306.8" cy="38" r="3.4" fill="#2f7a1e"/><circle cx="304" cy="36.2" r="2.8" fill="#27681a"/><circle cx="300.5" cy="41" r="1.8" fill="#235e14"/><circle cx="308" cy="41" r="1.9" fill="#235e14"/><circle cx="304.2" cy="40.5" r="2" fill="#1f5812"/>
<rect x="344.5" y="33.5" width="17" height="19.5" rx="1" fill="#e6f0fa" stroke="#e0a060" stroke-width="1.6"/>
<rect x="343" y="37.5" width="3.5" height="1.5" rx=".7" fill="#8a5a30"/>
<rect x="343" y="41" width="3.5" height="1.5" rx=".7" fill="#8a5a30"/>
<rect x="343" y="44.5" width="3.5" height="1.5" rx=".7" fill="#8a5a30"/>
<rect x="343" y="48" width="3.5" height="1.5" rx=".7" fill="#8a5a30"/>
<line x1="348" y1="38" x2="359" y2="38" stroke="#c9d6e4" stroke-width=".6"/>
<line x1="348" y1="41" x2="359" y2="41" stroke="#c9d6e4" stroke-width=".6"/>
<line x1="348" y1="44" x2="359" y2="44" stroke="#c9d6e4" stroke-width=".6"/>
<line x1="348" y1="47" x2="359" y2="47" stroke="#c9d6e4" stroke-width=".6"/>
<path d="M363,36.5 L361.5,35 L352,45.5 L351.5,48 L353.5,47 Z" fill="#2f5fb0"/>
<path d="M390.3,34.2 L392.8,36.9 Q397,33.5 401,33.7 Q410,34.5 410.3,43 Q410.3,49 401.8,52.6 Q405.5,49 405.4,45.9 Q405,40.8 400.9,40.7 Q399.5,40.7 398.2,41.4 L400.9,44.5 L390.3,44.5 Z" fill="url(#gUndo)" stroke="#2f6fb8" stroke-width=".6" stroke-linejoin="round"/>
<path d="M 453.20,34.20 L 450.70,36.90 Q 446.50,33.50 442.50,33.70 Q 433.50,34.50 433.20,43.00 Q 433.20,49.00 441.70,52.60 Q 438.00,49.00 438.10,45.90 Q 438.50,40.80 442.60,40.70 Q 444.00,40.70 445.30,41.40 L 442.60,44.50 L 453.20,44.50 Z" fill="url(#gRedo)" stroke="#a9c6e4" stroke-width=".5" stroke-linejoin="round"/>
<path d="M486,33.5 H493.5 L497,37 V46.5 H486 Z" fill="#e1ebf6" stroke="#c7d8ec" stroke-width=".9"/>
<path d="M492,40 H499.5 L503,43.5 V53.3 H492 Z" fill="#e8eef7" stroke="#c7d8ec" stroke-width=".9"/>
<path d="M540,45 Q540,39 549,39 Q558.5,39 558.5,45 Q558.5,51 549,51 Q546,51 544,50.5 L541.5,52.5 L542.3,49.3 Q540,47.5 540,45 Z" fill="#5ab4e6"/>
<circle cx="544.5" cy="45" r=".9" fill="#235a8a"/><circle cx="547.5" cy="45" r=".9" fill="#235a8a"/>
<path d="M549.5,47.8 L550,44.5 L557.5,35.5 L560,37.8 L552.5,46.5 Z" fill="#f0c850"/><path d="M557.5,35.5 L558.8,34 L561.3,36.3 L560,37.8 Z" fill="#c03030"/><path d="M549.5,47.8 L550,46 L551.3,47 Z" fill="#111"/>
<path d="M608.25,41.29 L610.99,41.53 L610.99,45.67 L608.25,45.91 L607.70,47.24 L609.47,49.35 L606.55,52.27 L604.44,50.50 L603.11,51.05 L602.87,53.79 L598.73,53.79 L598.49,51.05 L597.16,50.50 L595.05,52.27 L592.13,49.35 L593.90,47.24 L593.35,45.91 L590.61,45.67 L590.61,41.53 L593.35,41.29 L593.90,39.96 L592.13,37.85 L595.05,34.93 L597.16,36.70 L598.49,36.15 L598.73,33.41 L602.87,33.41 L603.11,36.15 L604.44,36.70 L606.55,34.93 L609.47,37.85 L607.70,39.96 Z M605.0,43.6 A4.2,4.2 0 1 0 596.5999999999999,43.6 A4.2,4.2 0 1 0 605.0,43.6 Z" fill="url(#gGear)" fill-rule="evenodd" stroke="#5a9de0" stroke-width=".8"/>
<circle cx="600.8" cy="43.6" r="3.6" fill="#f0f0f0" stroke="#4f8fd6" stroke-width="1.2"/><circle cx="600.8" cy="43.6" r="6" fill="none" stroke="#8cc0f0" stroke-width=".8"/>
<circle cx="643" cy="43.5" r="10.2" fill="url(#gHelp)" stroke="#2a64b0" stroke-width=".6"/>
<path d="M639.2,40.3 Q639.2,36.3 643.2,36.3 Q647.2,36.3 647.2,40 Q647.2,42.2 644.8,43.4 Q643.6,44 643.6,46 V46.8" fill="none" stroke="#fff" stroke-width="2.1"/><circle cx="643.6" cy="49.7" r="1.3" fill="#fff"/>
<path d="M19.3,104.3 Q26.7,96.5 34.2,104.3 Q26.7,112.1 19.3,104.3 Z" fill="none" stroke="#2a2a2a" stroke-width="1.2"/><circle cx="26.7" cy="104.3" r="2.6" fill="none" stroke="#2a2a2a" stroke-width="1.3"/>
<rect x="22.4" y="155.9" width="10" height="10.2" rx="1.6" fill="none" stroke="#1e1e1e" stroke-width="1.6"/><path d="M23.8,158 H25.3 M26.5,158 H31 M23.8,161.3 H26.8 M28,159 V162.5 L26.2,164.2 H23.8 M31,159.2 V164.5" stroke="#1e1e1e" stroke-width="1.1" fill="none"/>
<path d="M20.5,214.8 L24.5,210 L29.5,209.8 L33.2,214.2 V220.5 L28.5,222.5 L20.8,219.8 Z M20.5,214.8 L28.5,215.5 L33.2,214.2 M28.5,215.5 V222.5 M28.5,215.5 L24.5,210 M29.5,209.8 L28.5,215.5" fill="none" stroke="#1a1a1a" stroke-width="1.1" stroke-linejoin="round"/><rect x="22.5" y="216.5" width="3" height="1.8" fill="#1a1a1a"/><path d="M30.5,221 V217.5" stroke="#1a1a1a" stroke-width="1.2"/>
<path d="M26.6,262.3 L32.8,265.5 V271.5 L26.6,274.5 L20.4,271.5 V265.5 Z" fill="none" stroke="#2a2a2a" stroke-width="1.3"/><path d="M20.4,271.5 L26.6,268.5 L32.8,271.5 M26.6,262.3 V268.5" fill="none" stroke="#2a2a2a" stroke-width="1"/><circle cx="24" cy="267" r="1.6" fill="none" stroke="#2a2a2a" stroke-width="1"/><path d="M29,264.8 V270" stroke="#2a2a2a" stroke-width="1.2"/>
<path d="M22.2,321 Q22.2,318.5 26,318.5 Q27.4,318.5 27.4,320.5 Q27.4,318.5 29,318.5 Q32.3,318.5 32.3,321 Q32.3,322.3 29.5,321.5 H24.5 Q22.2,322.3 22.2,321 Z" fill="none" stroke="#1e1e1e" stroke-width="1.1"/><path d="M27.4,320.5 V323" stroke="#1e1e1e" stroke-width="1.2"/>
<path d="M19.2,323 V327.8 M19.2,325.4 Q19.2,323 21,323 H30.5 Q33.8,323 33.8,326.5 V330 H31.2 V327.5 Q31.2,325.9 29.5,325.9 H28 Q27,327.5 25.5,325.9 H21" fill="none" stroke="#1e1e1e" stroke-width="1.2"/><rect x="18.8" y="323" width="2.2" height="5" fill="none" stroke="#1e1e1e" stroke-width="1"/>
<circle cx="83.3" cy="516.8" r="4.6" fill="none" stroke="#111" stroke-width="1.8"/><path d="M86.6,520.1 L90.1,523.6" stroke="#111" stroke-width="2.2" stroke-linecap="round"/><path d="M81.0,516.8 H85.6" stroke="#111" stroke-width="1.6"/>
<circle cx="106.5" cy="516.8" r="4.6" fill="none" stroke="#111" stroke-width="1.8"/><path d="M109.8,520.1 L113.3,523.6" stroke="#111" stroke-width="2.2" stroke-linecap="round"/><path d="M104.2,516.8 H108.8" stroke="#111" stroke-width="1.6"/>
<path d="M106.5,514.5 V519.1" stroke="#111" stroke-width="1.6"/>
<path d="M128.8,520.8 L139.8,511.2 L142.8,514.2 L131.8,523.8 Z" fill="none" stroke="#111" stroke-width="1.4"/><path d="M132.5,519.5 L133.8,520.8 M135,517.3 L136.3,518.6 M137.5,515 L138.8,516.3" stroke="#111" stroke-width=".9"/>
<path d="M155.2,517.9 H165.2 M160.2,512.8 V523" stroke="#222" stroke-width="1.3"/><rect x="155.5" y="513" width="9.5" height="9.8" fill="none" stroke="#444" stroke-width=".9" stroke-dasharray="1,1"/>
<path d="M216.3,518.3 L221.5,513.5 L226.8,518.3 H225.2 V522.8 H223 V519.5 H220 V522.8 H217.8 V518.3 Z" fill="#111"/>
<path d="M622.5,516 L629,513.5 L635.5,516 L629,518.5 Z" fill="#111"/><path d="M622.5,519 L629,521.5 L635.5,519 M622.5,522 L629,524.5 L635.5,522" fill="none" stroke="#111" stroke-width="1.3"/><path d="M632,513.2 V518.2 M629.5,515.7 H634.5" stroke="#fff" stroke-width="1"/><path d="M632.3,512 V517.5 M629.6,514.8 H635" stroke="#111" stroke-width="1.5"/>
<path d="M707,518.5 L713,511.5 L719.3,518 H717.7 V524 H708.8 V518.5 Z" fill="#111"/><path d="M715.8,511.8 V514.5" stroke="#111" stroke-width="1.5"/><path d="M719,520.5 V526.3 M716.2,523.4 H722.2" stroke="#fff" stroke-width="3.3"/><path d="M719.2,520.3 V526.5 M716,523.4 H722.4" stroke="#111" stroke-width="1.7"/>
<path d="M826.5,131.5 L832.5,146 M830.5,130.5 L831,146 M835.5,130 L830,146 M833,131 L833.5,146" stroke="#e3a048" stroke-width="1.2"/><path d="M825.8,128.5 L827.2,132.5 M830,127.8 L830.6,131.8 M826.3,128.2 L825.6,131" stroke="#7a7a7a" stroke-width="1.1"/><path d="M836.3,129.3 L835,131.8" stroke="#c89050" stroke-width="1"/>
<path d="M827.4,135.8 H836.4 V147.4 Q831.9,148.6 827.4,147.4 Z" fill="#d9eefa" fill-opacity=".55" stroke="#5f93bd" stroke-width=".9"/>
<path d="M887.3,132.5 L897,128.2 L908,133 V143 L898,147.3 L887.3,143 Z" fill="#d9c08a"/><path d="M898,137.5 L908,133 V143 L898,147.3 Z" fill="#c7aa6a"/><path d="M897,128.2 L908,133 L898,137.5 L887.3,132.5 Z" fill="#e8d9ae"/><path d="M899.5,133.5 L905,131.2 V141 L899.5,143.3 Z" fill="#f2c830"/><rect x="889.5" y="133" width="4" height="3" fill="#7a9ad6"/>
<circle cx="891.4" cy="144" r="4.6" fill="#3ec24a" stroke="#fff" stroke-width=".8"/><path d="M891.4,141.5 V146.3 M889,143.9 H893.8" stroke="#fff" stroke-width="1.3"/>
<path d="M954,133 L958,130 H972.5 V145 L969,147.2 H954 Z" fill="#d05a58"/><path d="M969,133 L972.5,130 V145 L969,147.2 Z" fill="#b84846"/><path d="M969,133 V147.2 M954,133 H969 L972.5,130" fill="none" stroke="#e8a0a0" stroke-width=".6"/>
<line x1="954" y1="136.5" x2="969" y2="136.5" stroke="#f2c0b8" stroke-width=".8"/>
<line x1="954" y1="140" x2="969" y2="140" stroke="#f2c0b8" stroke-width=".8"/>
<line x1="954" y1="143.5" x2="969" y2="143.5" stroke="#f2c0b8" stroke-width=".8"/>
<path d="M959,133 V136.5 M964,133 V136.5 M956.5,136.5 V140 M961.5,136.5 V140 M966.5,136.5 V140 M959,140 V143.5 M964,140 V143.5 M956.5,143.5 V147 M961.5,143.5 V147 M966.5,143.5 V147" stroke="#f2c0b8" stroke-width=".7"/>
<path d="M824.8,190 Q826,184.6 832,184.4 Q838.9,184.3 838.9,187.6 V197.2 L835,198.8 L825,197.2 Z" fill="url(#gChair)" stroke="#4a88c8" stroke-width=".6"/>
<path d="M825.5,194.2 L834.2,195.3 L838.5,193.6 V197.2 L835,199.2 L825.5,197.6 Z" fill="#bfe0f8"/>
<rect x="823.9" y="189.8" width="2.1" height="11.7" fill="url(#gLeg)"/><rect x="833.4" y="191.2" width="1.9" height="11.8" fill="url(#gLeg)"/><rect x="836.8" y="197" width="1.2" height="3.2" fill="#d09040"/>
<rect x="889.8" y="183.5" width="15.3" height="20.5" fill="#d0802a"/><rect x="891.5" y="185.2" width="12" height="18.8" fill="#a8d84a"/><rect x="891.5" y="185.2" width="12" height="9" fill="#f6e45a"/>
<path d="M895.5,186.5 L904,184.2 V204 L895.5,202.5 Z" fill="#e8903a" stroke="#b86a20" stroke-width=".6"/><circle cx="897.2" cy="194" r=".6" fill="#7a4010"/>
<rect x="953.5" y="183.5" width="19" height="19.5" rx="1" fill="#d6dbe0" stroke="#c0c6cc" stroke-width=".6"/><rect x="955.5" y="185.3" width="6" height="3.5" fill="#2aa0e0"/><rect x="955.5" y="190" width="6" height="11.2" fill="#2aa0e0"/><rect x="963" y="185.3" width="7.5" height="15.9" fill="#2aa0e0"/>
<path d="M831.7,239.5 V244" stroke="#5a7ab0" stroke-width="1"/><rect x="830.3" y="243.3" width="2.8" height="2.2" fill="#607090"/>
<path d="M823,253.3 Q823.5,245 831.7,245 Q840,245 840.5,253.3 Z" fill="#e05555"/><rect x="822.5" y="252.8" width="18.5" height="1.4" rx=".7" fill="#9a9a9a"/>
<path d="M828,256.5 L827,257.5 M831.7,257 V259.8 M835.4,256.5 L836.4,257.5" stroke="#333" stroke-width=".8"/><circle cx="831.7" cy="255.3" r="1.4" fill="#f0d070"/>
<path d="M890,258 V248.5 L903.5,241.3" fill="none" stroke="#222" stroke-width="1.1"/>
<rect x="891.0" y="255.5" width="15.6" height="2.4" fill="#e07a20"/>
<rect x="894.2" y="252.2" width="12.4" height="2.4" fill="#e07a20"/>
<rect x="897.4" y="248.9" width="9.2" height="2.4" fill="#e07a20"/>
<rect x="900.6" y="245.6" width="6.0" height="2.4" fill="#e07a20"/>
<rect x="891" y="255.5" width="15.6" height="3.5" fill="#e07a20"/>
<rect x="954.5" y="240.4" width="17" height="2.2" fill="#cfcfcf"/><path d="M955,242.5 H971 Q973.3,243.2 973.3,245.8 Q973.3,249 970.5,249.6 Q968,250.6 963,250.6 Q958,250.6 955.5,249.6 Q952.8,249 952.8,245.8 Q952.8,243.2 955,242.5 Z" fill="#dedede" stroke="#a8a8a8" stroke-width=".7"/>
<ellipse cx="956" cy="246" rx="2.2" ry="2" fill="#f2f2f2" stroke="#b0b0b0" stroke-width=".6"/><ellipse cx="970" cy="246" rx="2.2" ry="2" fill="#f2f2f2" stroke="#b0b0b0" stroke-width=".6"/><path d="M960,249 L961.5,244.5 H964.5 L966,249" fill="none" stroke="#555" stroke-width=".8"/>
<rect x="957.5" y="250.6" width="11" height="8.4" fill="#d6d6d6"/><path d="M959.5,251 V259 M962,251 V259 M964.5,251 V259 M967,251 V259" stroke="#a9a9a9" stroke-width=".8"/>
<rect x="978.5" y="293" width="10.6" height="10.5" fill="#f8f8f8" stroke="#a0a0a0" stroke-width=".7"/><path d="M980.5,295.5 H983 M980.5,298 H982 M980.5,300.5 H982" stroke="#7a7a7a" stroke-width=".8"/><path d="M983.5,295.5 H987.5 M983,298 H987.5 M983,300.5 H987.5" stroke="#4a7ab8" stroke-width=".8"/>
<path d="M813.5,314.1 L821,317.7 L817.2,321.3 L813.8,319.3 Z" fill="#3c3c3c"/><path d="M804.1,319.7 L813.5,314.1 L813.8,319.3 L808.2,322.2 Z" fill="#e2e2e2"/><path d="M808.2,322.2 L813.8,319.3 L817.2,321.3 L811.7,323.6 Z" fill="#cfcfcf"/>
<path d="M804.1,319.7 L811.7,323.6 L811.5,329.4 L804.3,324.9 Z" fill="#454545"/><path d="M811.7,323.6 L821,317.7 L821,322.8 L811.5,329.4 Z" fill="#f4f4f4" stroke="#bdbdbd" stroke-width=".5"/>
<path d="M818.5,340 H832.5 V356.5 H818.5 Z M823,340 V356.5 M828,340 V356.5" fill="#f8f8f8" stroke="#b0b0b0" stroke-width=".9"/>
<rect x="822.5" y="365.8" width="7" height="16" fill="#b6dcec" stroke="#79b2cc" stroke-width=".8"/><path d="M824,374 L825,373.5" stroke="#333" stroke-width=".7"/>
<path d="M978.8,323.4 Q984,319.2 989.2,323.4 Q984,327.59999999999997 978.8,323.4 Z" fill="#fbf4d6" stroke="#e3a545" stroke-width=".9"/><circle cx="984" cy="323.4" r="2.1" fill="#52aa44"/><circle cx="984" cy="323.4" r=".8" fill="#1f5a20"/>
<path d="M978.8,349.3 Q984,345.1 989.2,349.3 Q984,353.5 978.8,349.3 Z" fill="#fbf4d6" stroke="#e3a545" stroke-width=".9"/><circle cx="984" cy="349.3" r="2.1" fill="#52aa44"/><circle cx="984" cy="349.3" r=".8" fill="#1f5a20"/>
<path d="M978.8,375.2 Q984,371.0 989.2,375.2 Q984,379.4 978.8,375.2 Z" fill="#fbf4d6" stroke="#e3a545" stroke-width=".9"/><circle cx="984" cy="375.2" r="2.1" fill="#52aa44"/><circle cx="984" cy="375.2" r=".8" fill="#1f5a20"/>
</svg>
<div class="a" style="left:0;top:530.5px;width:1000px;height:1.5px;background:#8e8e8e"></div>
</body></html>
